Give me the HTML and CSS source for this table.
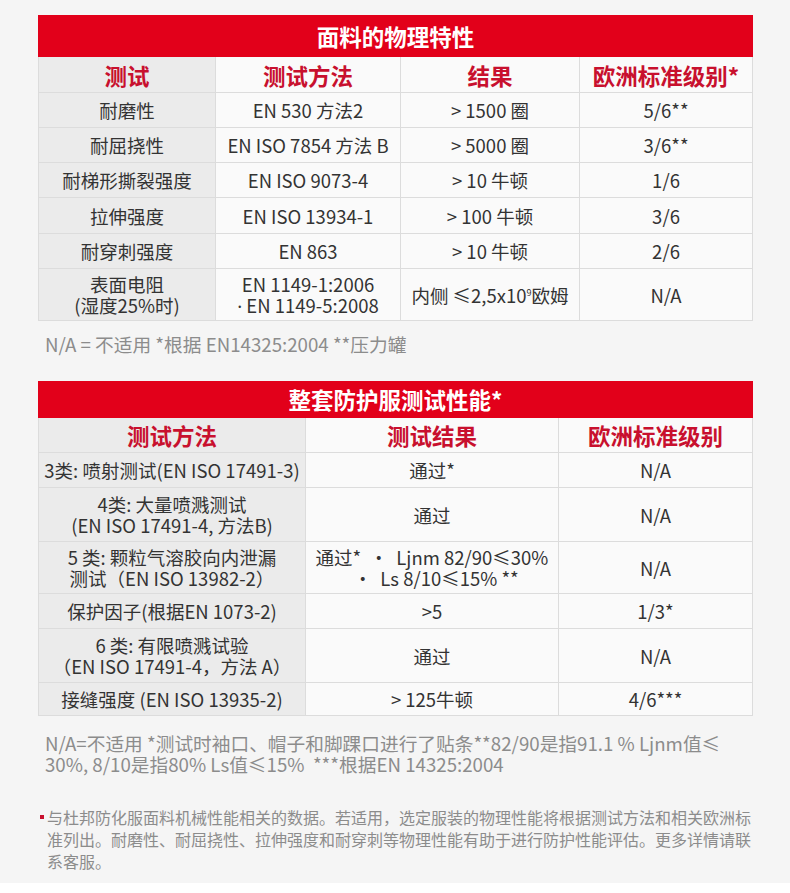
FILE: index.html
```html
<!DOCTYPE html>
<html lang="zh">
<head>
<meta charset="utf-8">
<title>面料的物理特性</title>
<link rel="stylesheet" href="styles.css">
</head>
<body>
<div class="page">
  <table class="spec spec-a">
    <colgroup><col class="a1"><col class="a2"><col class="a3"><col class="a4"></colgroup>
    <tr class="title"><th colspan="4">面料的物理特性</th></tr>
    <tr class="head h36"><th class="first">测试</th><th>测试方法</th><th>结果</th><th>欧洲标准级别*</th></tr>
    <tr class="h35"><td class="first">耐磨性</td><td>EN 530 方法2</td><td>&gt; 1500 圈</td><td>5/6**</td></tr>
    <tr class="h35"><td class="first">耐屈挠性</td><td>EN ISO 7854 方法 B</td><td>&gt; 5000 圈</td><td>3/6**</td></tr>
    <tr class="h35"><td class="first">耐梯形撕裂强度</td><td>EN ISO 9073-4</td><td>&gt; 10 牛顿</td><td>1/6</td></tr>
    <tr class="h36"><td class="first">拉伸强度</td><td>EN ISO 13934-1</td><td>&gt; 100 牛顿</td><td>3/6</td></tr>
    <tr class="h35"><td class="first">耐穿刺强度</td><td>EN 863</td><td>&gt; 10 牛顿</td><td>2/6</td></tr>
    <tr class="h52"><td class="first tight">表面电阻<br>(湿度25%时)</td><td class="tight">EN 1149-1:2006<br><span class="dot">·</span> EN 1149-5:2008</td><td>内侧 ≤2,5x10<sup>9</sup>欧姆</td><td>N/A</td></tr>
  </table>
  <p class="note note-a">N/A = 不适用 *根据 EN14325:2004 **压力罐</p>

  <table class="spec spec-b">
    <colgroup><col class="b1"><col class="b2"><col class="b3"></colgroup>
    <tr class="title t37"><th colspan="3">整套防护服测试性能*</th></tr>
    <tr class="head h35"><th class="first">测试方法</th><th>测试结果</th><th>欧洲标准级别</th></tr>
    <tr class="h35"><td class="first">3类: 喷射测试(EN ISO 17491-3)</td><td>通过*</td><td>N/A</td></tr>
    <tr class="h54"><td class="first tight">4类: 大量喷溅测试<br>(EN ISO 17491-4, 方法B)</td><td>通过</td><td>N/A</td></tr>
    <tr class="h52"><td class="first tight">5 类: 颗粒气溶胶向内泄漏<br>测试（EN ISO 13982-2）</td><td class="tight">通过* &nbsp;· &nbsp;Ljnm 82/90≤30%<br>&nbsp; · &nbsp;Ls 8/10≤15% **</td><td>N/A</td></tr>
    <tr class="h35"><td class="first">保护因子(根据EN 1073-2)</td><td>&gt;5</td><td>1/3*</td></tr>
    <tr class="h54"><td class="first tight">6 类: 有限喷溅试验<br>（EN ISO 17491-4，方法 A）</td><td>通过</td><td>N/A</td></tr>
    <tr class="h33"><td class="first">接缝强度 (EN ISO 13935-2)</td><td>&gt; 125牛顿</td><td>4/6***</td></tr>
  </table>
  <p class="note note-b">N/A=不适用 *测试时袖口、帽子和脚踝口进行了贴条**82/90是指91.1 % Ljnm值≤ 30%, 8/10是指80% Ls值≤15% &nbsp;***根据EN 14325:2004</p>

  <p class="remark"><span class="bullet"></span>与杜邦防化服面料机械性能相关的数据。若适用，选定服装的物理性能将根据测试方法和相关欧洲标准列出。耐磨性、耐屈挠性、拉伸强度和耐穿刺等物理性能有助于进行防护性能评估。更多详情请联系客服。</p>
</div>
<div class="strip"></div>
</body>
</html>
```

FILE: styles.css
```css
html, body {
  margin: 0;
  padding: 0;
}
body {
  background: #f5f5f5;
  font-family: "Noto Sans CJK SC", "Noto Sans", sans-serif;
  color: #333;
  width: 790px;
  height: 893px;
  overflow: hidden;
  display: flex;
  flex-direction: column;
}
.page {
  flex: 1;
  padding: 15px 38px 0 38px;
}
.strip {
  height: 10px;
  background: #ffffff;
}
.spec {
  width: 714px;
  border-collapse: collapse;
  table-layout: fixed;
}
.a1 { width: 177px; }
.a2 { width: 185px; }
.a3 { width: 179px; }
.a4 { width: 173px; }
.b1 { width: 267px; }
.b2 { width: 253px; }
.b3 { width: 194px; }

.spec td, .spec th {
  border: 1px solid #dcdcdc;
  background: #fafafa;
  text-align: center;
  vertical-align: middle;
  padding: 0;
  font-size: 18.5px;
  line-height: 22px;
  font-weight: 400;
  color: #333;
  white-space: nowrap;
}
.spec .first {
  background: #ebebeb;
}
.spec .tight {
  line-height: 21px;
}
.dot {
  font-family: "Noto Sans", sans-serif;
}
.spec .title th {
  background: #e2001a;
  border-color: #e2001a;
  color: #fff;
  font-size: 22.5px;
  font-weight: 700;
  height: 40px;
  line-height: 40px;
}
.spec .title.t37 th {
  height: 35px;
  line-height: 35px;
}
.spec .head th {
  color: #c8102e;
  font-size: 22.5px;
  font-weight: 700;
}
.h33 td, .h33 th { height: 32px; }
.h35 td, .h35 th { height: 34px; }
.h36 td, .h36 th { height: 35px; }
.h52 td, .h52 th { height: 51px; }
.h54 td, .h54 th { height: 53px; }

sup {
  font-size: 9px;
  line-height: 0;
  vertical-align: 7px;
}
.note {
  margin: 0;
  color: #8c8c8c;
  font-size: 18.7px;
}
.note-a {
  line-height: 22px;
  padding: 12px 6px 0 7px;
  height: 48px;
}
.note-b {
  line-height: 21px;
  padding: 16px 0 0 7px;
  width: 690px;
}
.remark {
  margin: 0;
  padding: 32px 0 0 9px;
  width: 706px;
  color: #8c8c8c;
  font-size: 16px;
  line-height: 22px;
  position: relative;
}
.bullet {
  position: absolute;
  left: 2px;
  top: 41px;
  width: 4px;
  height: 4px;
  background: #c8102e;
}
```
